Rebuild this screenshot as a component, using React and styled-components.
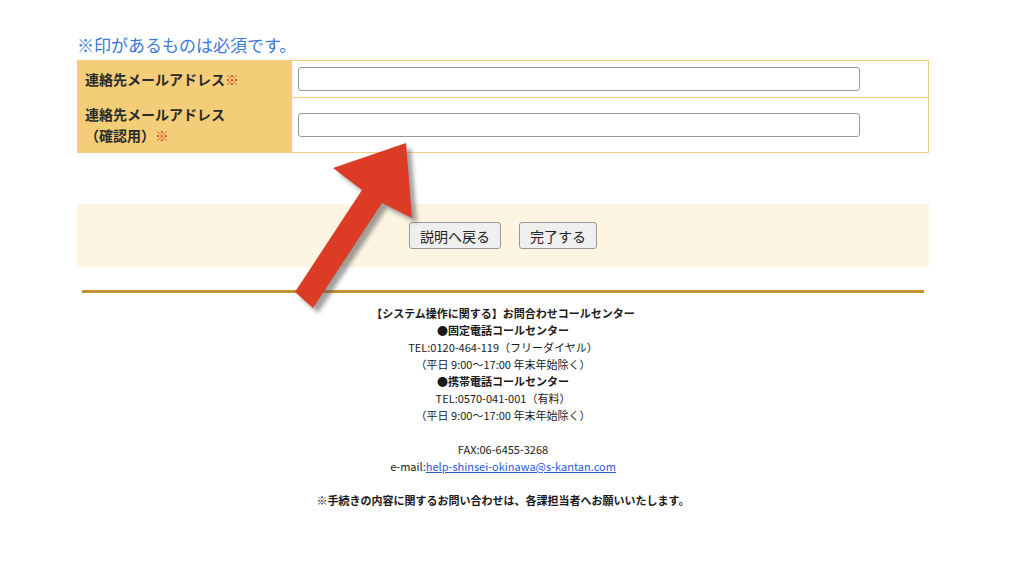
import styled, { createGlobalStyle } from "styled-components"

const GlobalStyle = createGlobalStyle`
  body {
    margin: 0;
    background: #ffffff;
    font-family: "Noto Sans CJK JP", "Noto Sans", sans-serif;
    color: #222;
  }
`

const Page = styled.div`
  position: relative;
  width: 1024px;
  height: 576px;
  overflow: hidden;
`

const Content = styled.div`
  width: 852px;
  margin-left: 77px;
  padding-top: 34px;
`

const Notice = styled.p`
  margin: 0 0 4px;
  font-size: 17px;
  line-height: 22px;
  color: #3b7ad6;
`

const FormTable = styled.table`
  width: 100%;
  border-collapse: collapse;
  border: 1px solid #f3cf7c;
`

const Row = styled.tr`
  height: ${p => p.$h}px;
  border-top: 1px solid #f3cf7c;
`

const Label = styled.th`
  width: 200px;
  background: #f3cd77;
  text-align: left;
  vertical-align: middle;
  padding: 0 7px;
  font-size: 14px;
  font-weight: 700;
  line-height: 21px;
  color: #2a2a2a;
  white-space: nowrap;
`

const Required = styled.span`
  color: #d8401f;
  font-weight: 400;
`

const Field = styled.td`
  padding: 0 6px;
  vertical-align: middle;
  background: #fff;
`

const Input = styled.input`
  display: block;
  box-sizing: border-box;
  width: 562px;
  height: 24px;
  border: 1px solid #9a9a9a;
  border-radius: 3px;
  background: #fff;
`

const ButtonBar = styled.div`
  margin-top: 51px;
  height: 63px;
  background: #fdf4e2;
  display: flex;
  justify-content: center;
  align-items: flex-start;
  padding-top: 18px;
  box-sizing: border-box;
  gap: 18px;
`

const Button = styled.button`
  height: 27px;
  padding: 0 10px;
  font-family: "Noto Sans CJK JP", sans-serif;
  font-size: 14px;
  color: #222;
  background: #efefef;
  border: 1px solid #979797;
  border-radius: 3px;
`

const Rule = styled.hr`
  margin: 23px 5px 0;
  border: none;
  height: 3px;
  background: #c3912f;
`

const Footer = styled.div`
  margin-top: 12px;
  text-align: center;
  font-size: 11px;
  line-height: 17px;
  color: #1a1a1a;
`

const Line = styled.div`
  font-weight: ${p => (p.$bold ? 700 : 400)};
  min-height: 17px;
`

const Mail = styled.a`
  color: #2a5bd7;
  text-decoration: underline;
`

const Overlay = styled.svg`
  position: absolute;
  left: 0;
  top: 0;
  pointer-events: none;
`

function Arrow() {
  const pts = "406,143 412,218 382,203 313,308 295,292 362,190 333,168"
  return (
    <Overlay width="1024" height="576" viewBox="0 0 1024 576">
      <defs>
        <filter id="blur" x="-20%" y="-20%" width="140%" height="140%">
          <feGaussianBlur stdDeviation="2" />
        </filter>
      </defs>
      <polygon points={pts} fill="#555" opacity="0.55" transform="translate(5 5)" filter="url(#blur)" />
      <polygon points={pts} fill="#dc3b25" />
    </Overlay>
  )
}

export default function App() {
  return (
    <Page>
      <GlobalStyle />
      <Content>
        <Notice>※印があるものは必須です。</Notice>
        <FormTable>
          <tbody>
            <Row $h={37}>
              <Label>連絡先メールアドレス<Required>※</Required></Label>
              <Field><Input type="text" /></Field>
            </Row>
            <Row $h={55}>
              <Label>連絡先メールアドレス<br />（確認用）<Required>※</Required></Label>
              <Field><Input type="text" /></Field>
            </Row>
          </tbody>
        </FormTable>
        <ButtonBar>
          <Button>説明へ戻る</Button>
          <Button>完了する</Button>
        </ButtonBar>
        <Rule />
        <Footer>
          <Line $bold>【システム操作に関する】お問合わせコールセンター</Line>
          <Line $bold>●固定電話コールセンター</Line>
          <Line>TEL:0120-464-119（フリーダイヤル）</Line>
          <Line>（平日 9:00～17:00 年末年始除く）</Line>
          <Line $bold>●携帯電話コールセンター</Line>
          <Line>TEL:0570-041-001（有料）</Line>
          <Line>（平日 9:00～17:00 年末年始除く）</Line>
          <Line />
          <Line>FAX:06-6455-3268</Line>
          <Line>e-mail:<Mail href="#">help-shinsei-okinawa@s-kantan.com</Mail></Line>
          <Line />
          <Line $bold>※手続きの内容に関するお問い合わせは、各課担当者へお願いいたします。</Line>
        </Footer>
      </Content>
      <Arrow />
    </Page>
  )
}
